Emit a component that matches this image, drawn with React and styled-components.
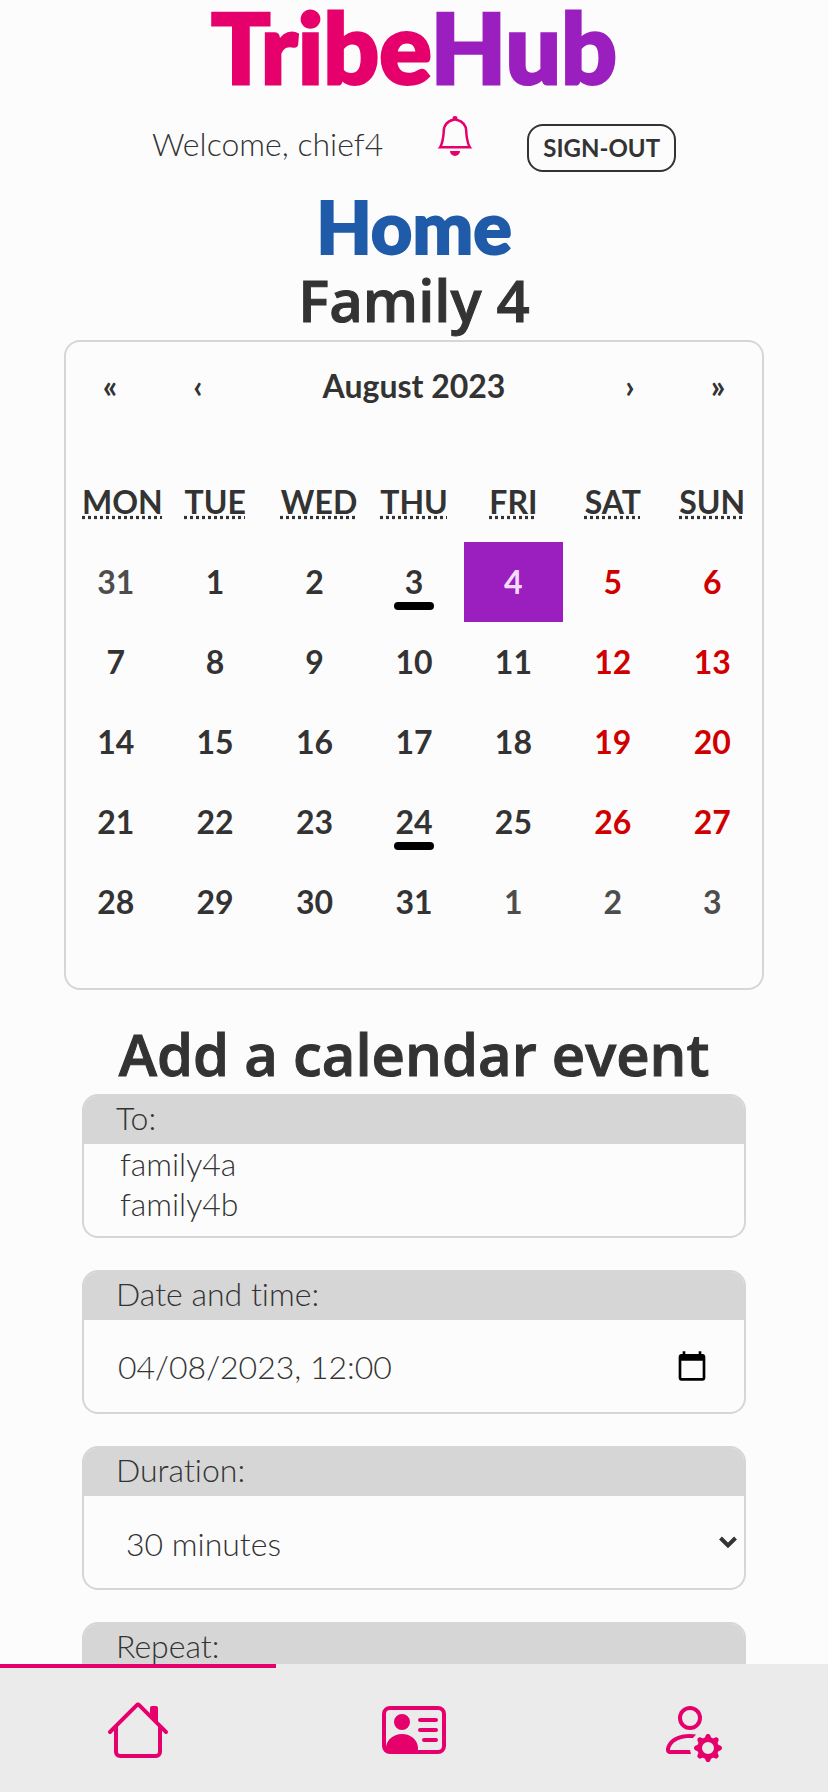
import React from "react";
import styled, { createGlobalStyle } from "styled-components";
import { BsBell, BsHouse, BsPersonVcard, BsPersonGear } from "react-icons/bs";

const PINK = "#e6006b";
const PURPLE = "#9b1fbf";
const INK = "#333";
const LINE = "#d6d6d6";
const PAPER = "#fcfcfc";

const GlobalStyle = createGlobalStyle`
  * { box-sizing: border-box; }
  body {
    margin: 0;
    background: ${PAPER};
    color: ${INK};
    font: 300 32px/40px Lato, sans-serif;
    font-variant-ligatures: none;
  }
  button, input, select, option { font: inherit; color: inherit; }
`;

const Shell = styled.div`
  display: flex;
  flex-direction: column;
  height: 100vh;
`;

const Page = styled.main`
  flex: 1;
  min-height: 0;
  overflow-y: auto;
  scrollbar-width: none;
  display: flex;
  flex-direction: column;
  align-items: center;
  & > * { flex-shrink: 0; }
`;

const Logo = styled.div`
  margin-bottom: 12px;
  font-size: 98px;
  line-height: 92px;
  font-weight: 900;
  color: ${PINK};
  -webkit-text-stroke: 3px currentColor;
`;

const LogoAccent = styled.span`
  color: ${PURPLE};
`;

const UserBar = styled.div`
  display: flex;
  align-items: center;
  gap: 52px;
  height: 80px;
`;

const BellButton = styled.button`
  display: flex;
  padding: 0 0 16px;
  border: 0;
  background: none;
  color: ${PINK};
`;

const SignOut = styled.button`
  height: 48px;
  margin-top: 8px;
  padding: 0 14px;
  border: 2px solid ${INK};
  border-radius: 16px;
  background: none;
  font-size: 24px;
  font-weight: 700;
  line-height: 32px;
`;

const Title = styled.h1`
  margin: 6px 0 2px;
  color: #1f5ba8;
  font-size: 72px;
  line-height: 72px;
  font-weight: 900;
  -webkit-text-stroke: 2px currentColor;
`;

const Heading = styled.h2`
  margin: 0;
  padding-bottom: 4px;
  font-family: "Open Sans", Lato, sans-serif;
  font-size: 58px;
  line-height: 72px;
  font-weight: 600;
  -webkit-text-stroke: 1px currentColor;
`;

const Calendar = styled.section`
  width: calc(100% - 128px);
  max-width: 700px;
  padding-bottom: 46px;
  margin-bottom: 28px;
  border: 2px solid ${LINE};
  border-radius: 16px;
  font-weight: 700;
`;

const CalendarNav = styled.div`
  display: flex;
  height: 88px;
  margin-bottom: 32px;
`;

const NavButton = styled.button`
  width: ${(p) => (p.$wide ? "auto" : "88px")};
  flex: ${(p) => (p.$wide ? 1 : "none")};
  padding: 0;
  border: 0;
  background: none;
`;

const Month = styled.table`
  width: 100%;
  table-layout: fixed;
  border-collapse: collapse;
`;

const Weekday = styled.th`
  height: 80px;
  padding: 0 16px;
  text-align: center;
  text-transform: uppercase;
  font-weight: 700;
`;

const DayCell = styled.td`
  height: 80px;
  padding: 0;
`;

const tone = { out: "#4d4d4d", weekend: "#d10000", selected: "#f5dcfa", normal: INK };

const Day = styled.button`
  position: relative;
  display: block;
  width: 100%;
  height: 80px;
  padding: 0;
  border: 0;
  background: ${(p) => (p.$tone === "selected" ? PURPLE : "none")};
  color: ${(p) => tone[p.$tone]};
`;

const EventMark = styled.span`
  position: absolute;
  left: calc(50% - 20px);
  bottom: 12px;
  width: 40px;
  height: 8px;
  border-radius: 4px;
  background: #000;
`;

const Form = styled.form`
  display: flex;
  flex-direction: column;
  gap: 32px;
  width: calc(100% - 164px);
  max-width: 664px;
`;

const Field = styled.div`
  border: 2px solid ${LINE};
  border-radius: 16px;
  overflow: hidden;
`;

const FieldLabel = styled.label`
  display: block;
  height: 48px;
  padding: 2px 32px 0;
  background: ${LINE};
`;

const FieldBody = styled.div`
  display: flex;
  align-items: center;
  position: relative;
  height: 92px;
`;

const PeopleList = styled.select`
  display: block;
  width: 100%;
  height: 92px;
  padding: 0 32px;
  border: 0;
  outline: 0;
  appearance: none;
  background: none;
  overflow: hidden;
`;

const Person = styled.option`
  height: 40px;
  padding: 0 4px;
`;

const DateInput = styled.input`
  flex: 1;
  min-width: 0;
  height: 92px;
  padding: 0 34px;
  border: 0;
  background: none;
`;

const PickerButton = styled.button`
  display: flex;
  margin-right: 36px;
  padding: 0;
  border: 0;
  background: none;
  color: #000;
`;

const Dropdown = styled.select`
  width: 100%;
  height: 92px;
  padding: 4px 42px 0;
  border: 0;
  appearance: none;
  background: none;
`;

const Chevron = styled.svg`
  position: absolute;
  right: 6px;
  top: 36px;
  pointer-events: none;
`;

const TabBar = styled.nav`
  display: flex;
  height: 128px;
  background: #ebebeb;
`;

const Tab = styled.a`
  flex: 1;
  display: flex;
  align-items: center;
  justify-content: center;
  border-top: 4px solid ${(p) => (p.$active ? PINK : "transparent")};
  color: ${PINK};
`;

const weekdays = [
  ["Mon", "Monday"], ["Tue", "Tuesday"], ["Wed", "Wednesday"], ["Thu", "Thursday"],
  ["Fri", "Friday"], ["Sat", "Saturday"], ["Sun", "Sunday"],
];

const weeks = [
  [31, 1, 2, 3, 4, 5, 6],
  [7, 8, 9, 10, 11, 12, 13],
  [14, 15, 16, 17, 18, 19, 20],
  [21, 22, 23, 24, 25, 26, 27],
  [28, 29, 30, 31, 1, 2, 3],
];

function dayTone(day, week, column) {
  if ((week === 0 && day > 7) || (week === 4 && day < 8)) return "out";
  if (day === 4) return "selected";
  return column > 4 ? "weekend" : "normal";
}

function SelectField({ id, label, options }) {
  return (
    <Field>
      <FieldLabel htmlFor={id}>{label}</FieldLabel>
      <FieldBody>
        <Dropdown id={id}>
          {options.map((o) => <option key={o}>{o}</option>)}
        </Dropdown>
        <Chevron width="20" height="20" viewBox="0 0 20 20" aria-hidden="true">
          <path d="M2.5 6 10 13.5 17.5 6" fill="none" stroke={INK} strokeWidth="4" />
        </Chevron>
      </FieldBody>
    </Field>
  );
}

export default function App() {
  return (
    <Shell>
      <GlobalStyle />
      <Page>
        <Logo>Tribe<LogoAccent>Hub</LogoAccent></Logo>
        <UserBar>
          <span>Welcome, chief4</span>
          <BellButton aria-label="Notifications"><BsBell size={40} /></BellButton>
          <SignOut>SIGN-OUT</SignOut>
        </UserBar>
        <Title>Home</Title>
        <Heading>Family 4</Heading>
        <Calendar>
          <CalendarNav>
            <NavButton aria-label="Previous year">«</NavButton>
            <NavButton aria-label="Previous month">‹</NavButton>
            <NavButton $wide>August 2023</NavButton>
            <NavButton aria-label="Next month">›</NavButton>
            <NavButton aria-label="Next year">»</NavButton>
          </CalendarNav>
          <Month>
            <thead>
              <tr>
                {weekdays.map(([short, full]) => (
                  <Weekday key={short} scope="col"><abbr title={full}>{short}</abbr></Weekday>
                ))}
              </tr>
            </thead>
            <tbody>
              {weeks.map((days, week) => (
                <tr key={week}>
                  {days.map((day, column) => (
                    <DayCell key={day}>
                      <Day $tone={dayTone(day, week, column)}>
                        {day}
                        {column === 3 && (day === 3 || day === 24) && <EventMark />}
                      </Day>
                    </DayCell>
                  ))}
                </tr>
              ))}
            </tbody>
          </Month>
        </Calendar>
        <Heading>Add a calendar event</Heading>
        <Form>
          <Field>
            <FieldLabel htmlFor="to">To:</FieldLabel>
            <PeopleList id="to" multiple size={2}>
              <Person>family4a</Person>
              <Person>family4b</Person>
            </PeopleList>
          </Field>
          <Field>
            <FieldLabel htmlFor="start">Date and time:</FieldLabel>
            <FieldBody>
              <DateInput id="start" defaultValue="04/08/2023, 12:00" />
              <PickerButton type="button" aria-label="Open calendar">
                <svg width="32" height="32" viewBox="0 0 24 24" fill="currentColor">
                  <path d="M20 3h-1V1h-2v2H7V1H5v2H4c-1.100 0-2 .9-2 2v16c0 1.100.9 2 2 2h16c1.100 0 2-.9 2-2V5c0-1.100-.9-2-2-2zm0 18H4V8h16v13z" />
                </svg>
              </PickerButton>
            </FieldBody>
          </Field>
          <SelectField id="duration" label="Duration:" options={["30 minutes", "1 hour"]} />
          <SelectField id="repeat" label="Repeat:" options={["None", "Daily", "Weekly"]} />
        </Form>
      </Page>
      <TabBar>
        <Tab href="#home" aria-label="Home" $active><BsHouse size={64} /></Tab>
        <Tab href="#contacts" aria-label="Contacts"><BsPersonVcard size={64} /></Tab>
        <Tab href="#account" aria-label="Account settings"><BsPersonGear size={64} /></Tab>
      </TabBar>
    </Shell>
  );
}
